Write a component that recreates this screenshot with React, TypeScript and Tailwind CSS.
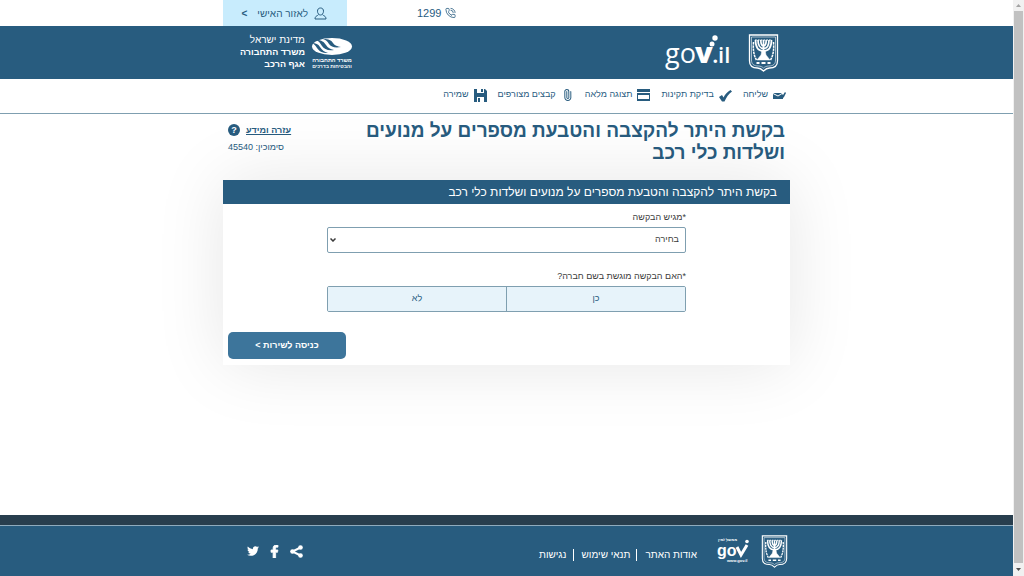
import { useState, type ReactNode } from "react";
import { Paperclip, PhoneCall } from "lucide-react";
import { FaFacebookF, FaTwitter } from "react-icons/fa";

const FORM_TITLE = "בקשת היתר להקצבה והטבעת מספרים על מנועים ושלדות כלי רכב";

const Container = ({
  className = "",
  children,
}: {
  className?: string;
  children: ReactNode;
}) => (
  <div className={`mx-auto flex w-full max-w-[567px] ${className}`}>
    {children}
  </div>
);

const StateEmblem = ({ className }: { className: string }) => (
  <svg viewBox="0 0 30 38" className={className} fill="none" stroke="currentColor">
    <path d="M1 1h28v26c0 5-3 7-8 7-3 0-4 1-6 3-2-2-3-3-6-3-5 0-8-2-8-7z" strokeWidth="1.3" />
    <path d="M3 3h24v23c0 4-2 6-7 6-2 0-4 1-5 2-1-1-3-2-5-2-5 0-7-2-7-6z" strokeWidth="0.6" />
    <path
      d="M7 6c0 7 3 11 8 11s8-4 8-11M9.500 6c0 5 2 8.500 5.500 8.500s5.500-3.500 5.500-8.500M12.300 6c0 3 1 6 2.700 6s2.700-3 2.700-6M15 6v15"
      strokeWidth="1.700"
    />
    <path d="M6.500 6h17" strokeWidth="1.200" strokeDasharray="1.800 1" />
    <path d="M13.500 16h3l1 5 4 5H8.500l4-5z" fill="currentColor" strokeWidth="0.500" />
    <path d="M5 8c-.5 7 0 13 3 18M25 8c.5 7 0 13-3 18" strokeWidth="1.500" strokeDasharray="2.500 0.700" />
    <path d="M8 29h3M13 29h4M19 29h3" strokeWidth="1.800" />
  </svg>
);

const GovLogo = () => (
  <svg viewBox="0 0 66 36" className="h-9 w-[66px] overflow-visible" fill="currentColor">
    <g fontFamily='"Open Sans", sans-serif' direction="ltr">
      <text x="0" y="28" fontSize="27" fontWeight="500">
        go
      </text>
      <text x="30" y="28" fontSize="29" fontWeight="800">
        v
      </text>
      <text x="47" y="28" fontSize="24" fontWeight="600">
        .
      </text>
      <text x="53" y="28" fontSize="22" fontWeight="600">
        il
      </text>
    </g>
    <circle cx="47" cy="9" r="2.500" />
    <circle cx="50" cy="3" r="2.700" />
  </svg>
);

const GovFooterLogo = () => (
  <svg viewBox="0 0 32 24" className="h-6 w-8 overflow-visible" fill="currentColor">
    <g fontFamily='"Liberation Sans", sans-serif' direction="ltr">
      <text x="0" y="17" fontSize="16" fontWeight="700">
        go
      </text>
      <text x="10" y="23" fontSize="4" fontWeight="700">
        www.gov.il
      </text>
      <text x="1" y="2" fontSize="4" fontWeight="700">
        ממשל זמין
      </text>
    </g>
    <path d="M20 8l4 8 6-10" fill="none" stroke="currentColor" strokeWidth="3" />
    <circle cx="30" cy="2.500" r="1.800" />
  </svg>
);

const MinistryLogo = () => (
  <svg viewBox="0 0 40 34" className="h-[34px] w-10 overflow-visible" fill="currentColor">
    <ellipse cx="20" cy="10.500" rx="20" ry="8.500" />
    <g className="fill-[#285c7f]">
      <path d="M0 7c4 0 6 1 8 4s4 5 8 6c-6 0-9-2-11-5S2 8 0 7z" />
      <path d="M4 4c6 0 8 2 10 5s4 4 8 5c-6 1-10-1-12-4S7 5 4 4z" />
      <path d="M11 3c6 0 8 1 10 4s4 3 8 4c-6 1-10 0-12-3S14 4 11 3z" />
    </g>
    <g fontFamily='"Liberation Sans", sans-serif' fontWeight="700" textAnchor="middle">
      <text x="20" y="26" fontSize="5.5">
        משרד התחבורה
      </text>
      <text x="20" y="32" fontSize="5">
        והבטיחות בדרכים
      </text>
    </g>
  </svg>
);

const UserIcon = () => (
  <svg viewBox="0 0 13 13" className="h-[13px] w-[13px]" fill="none" stroke="currentColor">
    <path d="M6.500 1c2 0 3 1.300 3 3.200S8.300 8 6.500 8s-3-1.900-3-3.800S4.500 1 6.500 1z" />
    <path d="M4.500 7.500C4 9 1 8.500 1 12h11c0-3.500-3-3-3.500-4.500" />
  </svg>
);

const SendIcon = () => (
  <svg viewBox="0 0 13 9" className="h-[9px] w-[13px]" fill="currentColor">
    <path d="M0 2h9L5 4.500zM0 3l5 2.500L9 3l1 1v4H0z" />
    <path d="M12 1l1 1-2 4-1 1V4z" />
  </svg>
);

const CheckIcon = () => (
  <svg viewBox="0 0 13 13" className="h-[13px] w-[13px]" fill="currentColor">
    <path d="M0 8l3-2 1.500 2.500C6 5.500 8.500 2.500 11.500 1L13 2.500C9.500 5 7.500 8 5.500 12.500H3z" />
  </svg>
);

const WindowIcon = () => (
  <svg viewBox="0 0 13 12" className="h-3 w-[13px]" fill="currentColor">
    <path d="M0 0h13v3H0zM0 4h13v8H0zM1 6v4h11V6z" fillRule="evenodd" />
  </svg>
);

const SaveIcon = () => (
  <svg viewBox="0 0 13 13" className="h-[13px] w-[13px]" fill="currentColor">
    <path d="M0 0h11l2 2v11H0zM3 0v4h7V0zM3 8v5h7V8z" fillRule="evenodd" />
    <path d="M7 0h2v3H7zM4 9h2v4H4z" />
  </svg>
);

const ShareIcon = () => (
  <svg viewBox="0 0 13 13" className="h-[13px] w-[13px]" fill="currentColor">
    <path d="M10.500 2.500L2.500 6.500l8 4" fill="none" stroke="currentColor" strokeWidth="2" />
    <circle cx="10.500" cy="2.500" r="2.300" />
    <circle cx="2.500" cy="6.500" r="2.300" />
    <circle cx="10.500" cy="10.500" r="2.300" />
  </svg>
);

const toolbar = [
  { label: "שליחה", icon: <SendIcon /> },
  { label: "בדיקת תקינות", icon: <CheckIcon /> },
  { label: "תצוגה מלאה", icon: <WindowIcon /> },
  { label: "קבצים מצורפים", icon: <Paperclip className="h-3 w-[13px] -rotate-45" /> },
  { label: "שמירה", icon: <SaveIcon /> },
];

const footerLinks = ["אודות האתר", "תנאי שימוש", "נגישות"];

const App: React.FC = () => {
  const [company, setCompany] = useState<string>("");

  return (
    <div className='flex min-h-screen bg-white font-["Liberation_Sans",Arial,sans-serif] text-[#285c7f]'>
      <div dir="rtl" className="flex min-w-0 flex-1 flex-col">
        <div className="text-[10px]">
          <Container className="h-[26px] items-stretch justify-end">
            <a href="#phone" className="flex items-center gap-1 text-[11px]">
              <PhoneCall className="h-3 w-[11px]" strokeWidth={1.8} />
              1299
            </a>
            <a
              href="#personal"
              className="ms-[70px] flex w-[124px] items-center bg-[#c8ecfd] ps-5"
            >
              <UserIcon />
              <span className="ms-1.5">לאזור האישי</span>
              <span className="ms-2.5 font-bold">&gt;</span>
            </a>
          </Container>
        </div>

        <header className="bg-[#285c7f] text-white">
          <Container className="h-[53px] items-center justify-between ps-[11px]">
            <a href="#home" aria-label="gov.il" className="flex items-center gap-[17px]">
              <StateEmblem className="h-[38px] w-[31px]" />
              <GovLogo />
            </a>
            <div className="flex w-[129px] items-center gap-[7px]">
              <MinistryLogo />
              <p className="pb-0.5 text-[9px] leading-3 font-bold whitespace-nowrap">
                <span className="text-[10px] font-normal">מדינת ישראל</span>
                <br />
                משרד התחבורה
                <br />
                אגף הרכב
              </p>
            </div>
          </Container>
        </header>

        <nav className="relative z-10 border-b border-[#7f9fb0] bg-white">
          <Container className="h-[34px] items-center gap-[11px] ps-1 pb-0.5 text-[9px]">
            {toolbar.map((item) => (
              <button key={item.label} type="button" className="flex items-center gap-[5px] whitespace-nowrap">
                {item.icon}
                {item.label}
              </button>
            ))}
          </Container>
        </nav>

        <main className="flex-1 overflow-hidden">
          <Container className="h-[66px] items-start justify-between ps-[5px] pt-1.5">
            <h1 className="w-[430px] text-[19px] leading-[22px] font-bold">
              {FORM_TITLE}
            </h1>
            <div className="me-[5px] w-[65px] shrink-0 pt-1 text-[9px] leading-3">
              <a href="#help" className="flex items-center justify-end gap-1.5 font-bold whitespace-nowrap">
                <span className="underline">עזרה ומידע</span>
                <span className="flex h-3 w-3 shrink-0 items-center justify-center rounded-full bg-[#285c7f] text-white">
                  ?
                </span>
              </a>
              <p className="mt-[5px] text-left whitespace-nowrap">סימוכין: 45540</p>
            </div>
          </Container>

          <Container>
            <form
              className="w-full bg-white shadow-[0_0_70px_rgba(0,0,0,0.1)]"
              onSubmit={(e) => e.preventDefault()}
            >
              <h2 className="bg-[#285c7f] px-[13px] text-[12px] leading-6 text-white">
                {FORM_TITLE}
              </h2>
              <div className="mx-auto w-[359px] pt-1.5 text-[9px] text-[#3b3b3b]">
                <label htmlFor="applicant" className="block leading-[14px]">
                  *מגיש הבקשה
                </label>
                <div className="relative mt-[3px]">
                  <select
                    id="applicant"
                    className="block h-[26px] w-full appearance-none rounded-[2px] border border-[#7f9fb0] bg-white px-1.5"
                  >
                    <option>בחירה</option>
                  </select>
                  <svg
                    viewBox="0 0 6 4"
                    className="pointer-events-none absolute top-[11px] left-[3px] h-1 w-1.5"
                    fill="none"
                    stroke="currentColor"
                    strokeWidth="1.500"
                  >
                    <path d="M0.500 0.500l2.500 2.500 2.500-2.500" />
                  </svg>
                </div>

                <fieldset className="mt-4">
                  <legend className="leading-[14px]">*האם הבקשה מוגשת בשם חברה?</legend>
                  <div className="mt-[3px] flex h-[26px] divide-x divide-[#7f9fb0] overflow-hidden rounded-[2px] border border-[#7f9fb0] text-[#285c7f]">
                    {["כן", "לא"].map((answer) => (
                      <label
                        key={answer}
                        className="flex flex-1 cursor-pointer items-center justify-center bg-[#e7f3fa] has-checked:bg-[#c8ecfd]"
                      >
                        <input
                          type="radio"
                          name="company"
                          value={answer}
                          checked={company === answer}
                          onChange={() => setCompany(answer)}
                          className="sr-only"
                        />
                        {answer}
                      </label>
                    ))}
                  </div>
                </fieldset>
              </div>
              <div className="flex justify-end px-[5px] pt-5 pb-1.5">
                <button
                  type="submit"
                  className="h-[27px] w-[118px] rounded-[5px] bg-[#3d759b] text-[9px] font-bold text-white"
                >
                  כניסה לשירות &gt;
                </button>
              </div>
            </form>
          </Container>
        </main>

        <footer className="border-t-[10px] border-[#283e4e] bg-[#285c7f] text-white">
          <div className="border-t border-[#8fabbd]">
            <Container className="h-[50px] items-center ps-[2px]">
              <StateEmblem className="h-[33px] w-[27px]" />
              <span className="ms-3">
                <GovFooterLogo />
              </span>
              <ul className="ms-5 flex divide-x divide-white pt-2 text-[10px] leading-3">
                {footerLinks.map((link) => (
                  <li key={link} className="ps-1.5 pe-2 first:ps-0">
                    <a href="#info">{link}</a>
                  </li>
                ))}
              </ul>
              <div className="ms-auto me-6 flex items-center gap-[9px] text-[13px]">
                <a href="#share" aria-label="שיתוף">
                  <ShareIcon />
                </a>
                <a href="#facebook" aria-label="פייסבוק">
                  <FaFacebookF stroke="currentColor" strokeWidth={30} />
                </a>
                <a href="#twitter" aria-label="טוויטר">
                  <FaTwitter className="h-3 w-3" />
                </a>
              </div>
            </Container>
          </div>
        </footer>
      </div>

      <div aria-hidden="true" className="flex w-[11px] shrink-0 flex-col items-center bg-[#f1f1f1] text-[#505050]">
        <svg viewBox="0 0 11 11" className="h-[11px] w-[11px]" fill="#a3a3a3">
          <path d="M3 7l2.500-3L8 7z" />
        </svg>
        <div className="w-[9px] flex-1 bg-[#c1c1c1]" />
        <svg viewBox="0 0 11 11" className="h-[13px] w-[11px]" fill="currentColor">
          <path d="M3 4l2.500 3L8 4z" />
        </svg>
      </div>
    </div>
  );
};

export default App;
